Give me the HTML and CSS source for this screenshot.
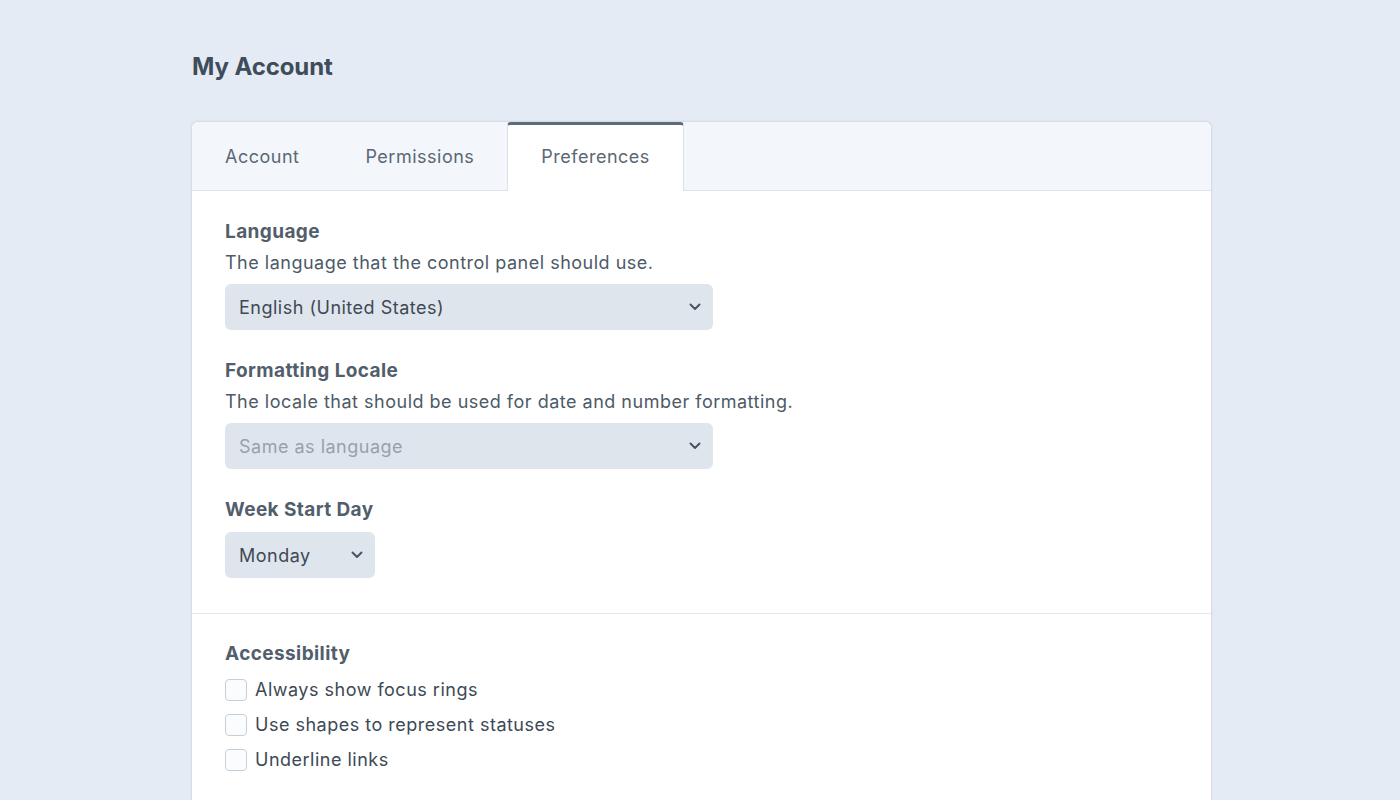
FILE: index.html
```html
<!DOCTYPE html>
<html lang="en">
<head>
<meta charset="utf-8">
<title>My Account</title>
<link rel="stylesheet" href="styles.css">
</head>
<body>
<main class="page">
  <h1 class="title">My Account</h1>
  <section class="card">
    <nav class="tabs">
      <a class="tab">Account</a>
      <a class="tab">Permissions</a>
      <a class="tab active">Preferences</a>
    </nav>
    <div class="pane">
      <div class="field">
        <div class="label">Language</div>
        <div class="instr">The language that the control panel should use.</div>
        <div class="select wide"><span>English (United States)</span><svg class="chev" viewBox="0 0 12 8" width="12" height="8"><path d="M1.5 1.5 L6 6 L10.5 1.5" fill="none" stroke="#4a5564" stroke-width="2" stroke-linecap="round" stroke-linejoin="round"/></svg></div>
      </div>
      <div class="field">
        <div class="label">Formatting Locale</div>
        <div class="instr">The locale that should be used for date and number formatting.</div>
        <div class="select wide"><span class="placeholder">Same as language</span><svg class="chev" viewBox="0 0 12 8" width="12" height="8"><path d="M1.5 1.5 L6 6 L10.5 1.5" fill="none" stroke="#4a5564" stroke-width="2" stroke-linecap="round" stroke-linejoin="round"/></svg></div>
      </div>
      <div class="field">
        <div class="label">Week Start Day</div>
        <div class="select narrow"><span>Monday</span><svg class="chev" viewBox="0 0 12 8" width="12" height="8"><path d="M1.5 1.5 L6 6 L10.5 1.5" fill="none" stroke="#4a5564" stroke-width="2" stroke-linecap="round" stroke-linejoin="round"/></svg></div>
      </div>
    </div>
    <div class="pane second">
      <div class="label">Accessibility</div>
      <ul class="checks">
        <li><span class="box"></span>Always show focus rings</li>
        <li><span class="box"></span>Use shapes to represent statuses</li>
        <li><span class="box"></span>Underline links</li>
      </ul>
    </div>
  </section>
</main>
</body>
</html>
```

FILE: styles.css
```css
* { box-sizing: border-box; }
html, body { margin: 0; padding: 0; }
body {
  background: #e4ebf4;
  font-family: Inter, "Noto Sans", "Liberation Sans", sans-serif;
  color: #3f4d5a;
  font-size: 18px;
  letter-spacing: 0.5px;
  overflow: hidden;
  height: 800px;
}
.page {
  width: 1021px;
  margin: 0 0 0 191px;
  padding-top: 50px;
}
.title {
  margin: 0 0 37px 1px;
  font-size: 24px;
  font-weight: 700;
  line-height: 34px;
  color: #3f4c5a;
  letter-spacing: -0.1px;
}
.card {
  background: #fff;
  border: 1px solid #d5dde7;
  border-bottom: none;
  border-radius: 7px 7px 0 0;
  box-shadow: 0 0 0 1px rgba(205,216,228,0.25);
  height: 700px;
}
.tabs {
  display: flex;
  height: 69px;
  background: #f3f7fc;
  border-bottom: 1px solid #dbe2ea;
  border-radius: 6px 6px 0 0;
}
.tab {
  display: flex;
  align-items: center;
  padding: 0 33px;
  font-size: 18px;
  color: #5b6774;
  height: 68px;
}
.tab.active {
  background: #fff;
  border-top: 3px solid #5e6a78;
  border-left: 1px solid #dbe2ea;
  border-right: 1px solid #dbe2ea;
  border-radius: 4px 4px 0 0;
  height: 69px;
  padding: 0 33px 3px;
  color: #5b6774;
}
.pane {
  padding: 30px 33px 35px;
}
.pane.second {
  border-top: 1px solid #e3e8ee;
  padding-top: 29px;
}
.field { margin-bottom: 30px; }
.field:last-child { margin-bottom: 0; }
.label {
  font-weight: 700;
  font-size: 19px;
  letter-spacing: 0.4px;
  line-height: 22px;
  color: #525e6b;
  margin-bottom: 8px;
}
.instr {
  font-size: 18px;
  line-height: 24px;
  color: #4d5a67;
  margin-bottom: 9px;
}
.select {
  display: flex;
  align-items: center;
  justify-content: space-between;
  height: 46px;
  background: #dfe5ec;
  border-radius: 6px;
  padding: 0 12px 0 14px;
  font-size: 18px;
  color: #3d4955;
}
.select.wide { width: 488px; }
.select.narrow { width: 150px; margin-top: 11px; }
.placeholder { color: #97a1ad; }
.chev { flex: none; }
.checks {
  list-style: none;
  margin: -1px 0 0;
  padding: 0;
}
.checks li {
  display: flex;
  align-items: center;
  height: 35px;
  font-size: 18px;
  color: #3d4955;
}
.box {
  width: 22px;
  height: 22px;
  border: 1px solid #c5cfdb;
  border-radius: 4px;
  background: #fbfcfe;
  margin-right: 8px;
  flex: none;
}
```
